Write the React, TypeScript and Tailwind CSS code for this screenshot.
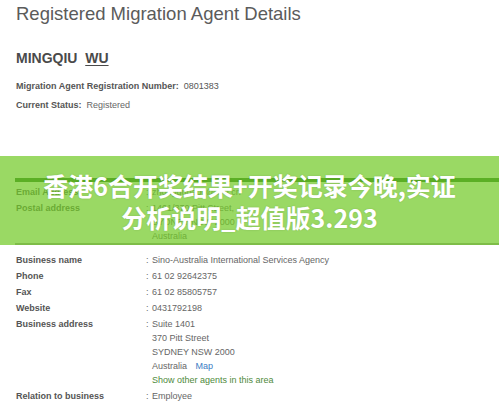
const upperRows = [
  { label: "Email Address", lines: ["zhongguoaoc@live.cn"] },
  { label: "Postal address", lines: ["1401/370 Pitt Street,", "SYDNEY NSW 2000", "Australia"] },
];

const Row = ({ label, children }: { label: string; children: React.ReactNode }) => (
  <div className="flex mb-[2px]">
    <div className="w-[130px] shrink-0 font-bold text-[#555]">{label}</div>
    <div className="flex text-[#666]">
      <span className="w-[6px] shrink-0">:</span>
      <div>{children}</div>
    </div>
  </div>
);

export default function App() {
  return (
    <div className="relative w-[499px] h-[402px] overflow-hidden bg-white font-['Liberation_Sans',Arial,sans-serif]">
      <div className="pl-4 pt-[3px]">
        <h1 className="text-[18.5px] leading-[22px] text-[#5b5b5b]">
          Registered Migration Agent Details
        </h1>
        <div className="mt-[25px] text-[14px] leading-[16px] font-bold text-[#4a4a4a]">
          MINGQIU&nbsp; <span className="underline underline-offset-2">WU</span>
        </div>
        <div className="mt-[14px] text-[9px] leading-[12px] text-[#555]">
          <span className="font-bold">Migration Agent Registration Number:</span>&nbsp; 0801383
        </div>
        <div className="mt-[7px] text-[9px] leading-[12px] text-[#555]">
          <span className="font-bold">Current Status:</span>&nbsp; <span className="text-[#666]">Registered</span>
        </div>
      </div>

      <div className="ml-[15px] mt-[67px] h-[4px] bg-[#1f6a1f]" />

      <div className="pl-4 mt-[3px] text-[9px] leading-[14px]">
        {upperRows.map((r) => (
          <Row key={r.label} label={r.label}>
            {r.lines.map((l) => (
              <div key={l}>{l}</div>
            ))}
          </Row>
        ))}
      </div>

      <div className="ml-[15px] mt-[-2px] h-[2px] bg-[#9a9a9a]" />

      <div className="pl-4 mt-[8px] text-[9px] leading-[14px]">
        <Row label="Business name">Sino-Australia International Services Agency</Row>
        <Row label="Phone">61 02 92642375</Row>
        <Row label="Fax">61 02 85805757</Row>
        <Row label="Website">0431792198</Row>
        <Row label="Business address">
          <div>Suite 1401</div>
          <div>370 Pitt Street</div>
          <div>SYDNEY NSW 2000</div>
          <div>
            Australia <span className="ml-[6px] text-[#3b7dc4]">Map</span>
          </div>
          <div className="text-[#4f8a3c]">Show other agents in this area</div>
        </Row>
        <Row label="Relation to business">Employee</Row>
      </div>

      <div className="absolute left-0 right-0 top-[156px] h-[89px] bg-[rgba(115,203,40,0.72)] flex items-center justify-center">
        <p className="text-center text-white font-bold text-[25px] leading-[32px] font-['Noto_Sans_CJK_SC','Noto_Sans',sans-serif] [text-shadow:0_0_2px_rgba(0,0,0,0.15)]">
          香港6合开奖结果+开奖记录今晚,实证
          <br />
          分析说明_超值版3.293
        </p>
      </div>
    </div>
  );
}
